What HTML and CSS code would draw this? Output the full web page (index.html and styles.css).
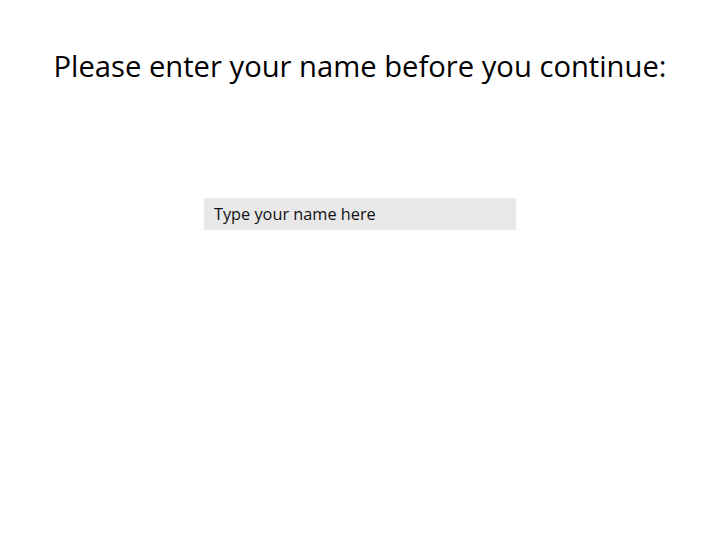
FILE: index.html
```html
<!DOCTYPE html>
<html>
<head>
<meta charset="utf-8">
<link rel="stylesheet" href="styles.css">
</head>
<body>
<main class="page">
  <h1 class="title">Please enter your name before you continue:</h1>
  <input class="name-input" type="text" placeholder="Type your name here">
</main>
</body>
</html>
```
FILE: styles.css
```css
html, body {
  margin: 0;
  padding: 0;
  background: #ffffff;
}
.page {
  display: flex;
  flex-direction: column;
  align-items: center;
  font-family: "Open Sans", "Noto Sans", sans-serif;
  color: #000;
}
.title {
  margin: 46px 0 0 0;
  font-size: 29.2px;
  font-weight: 400;
  line-height: 40px;
}
.name-input {
  margin-top: 112px;
  width: 312px;
  height: 32px;
  box-sizing: border-box;
  border: none;
  outline: none;
  background: #e8e8e8;
  padding: 0 10px;
  font-family: "Open Sans", "Noto Sans", sans-serif;
  font-size: 16.3px;
  color: #111;
}
.name-input::placeholder {
  color: #111;
  opacity: 1;
}
```
